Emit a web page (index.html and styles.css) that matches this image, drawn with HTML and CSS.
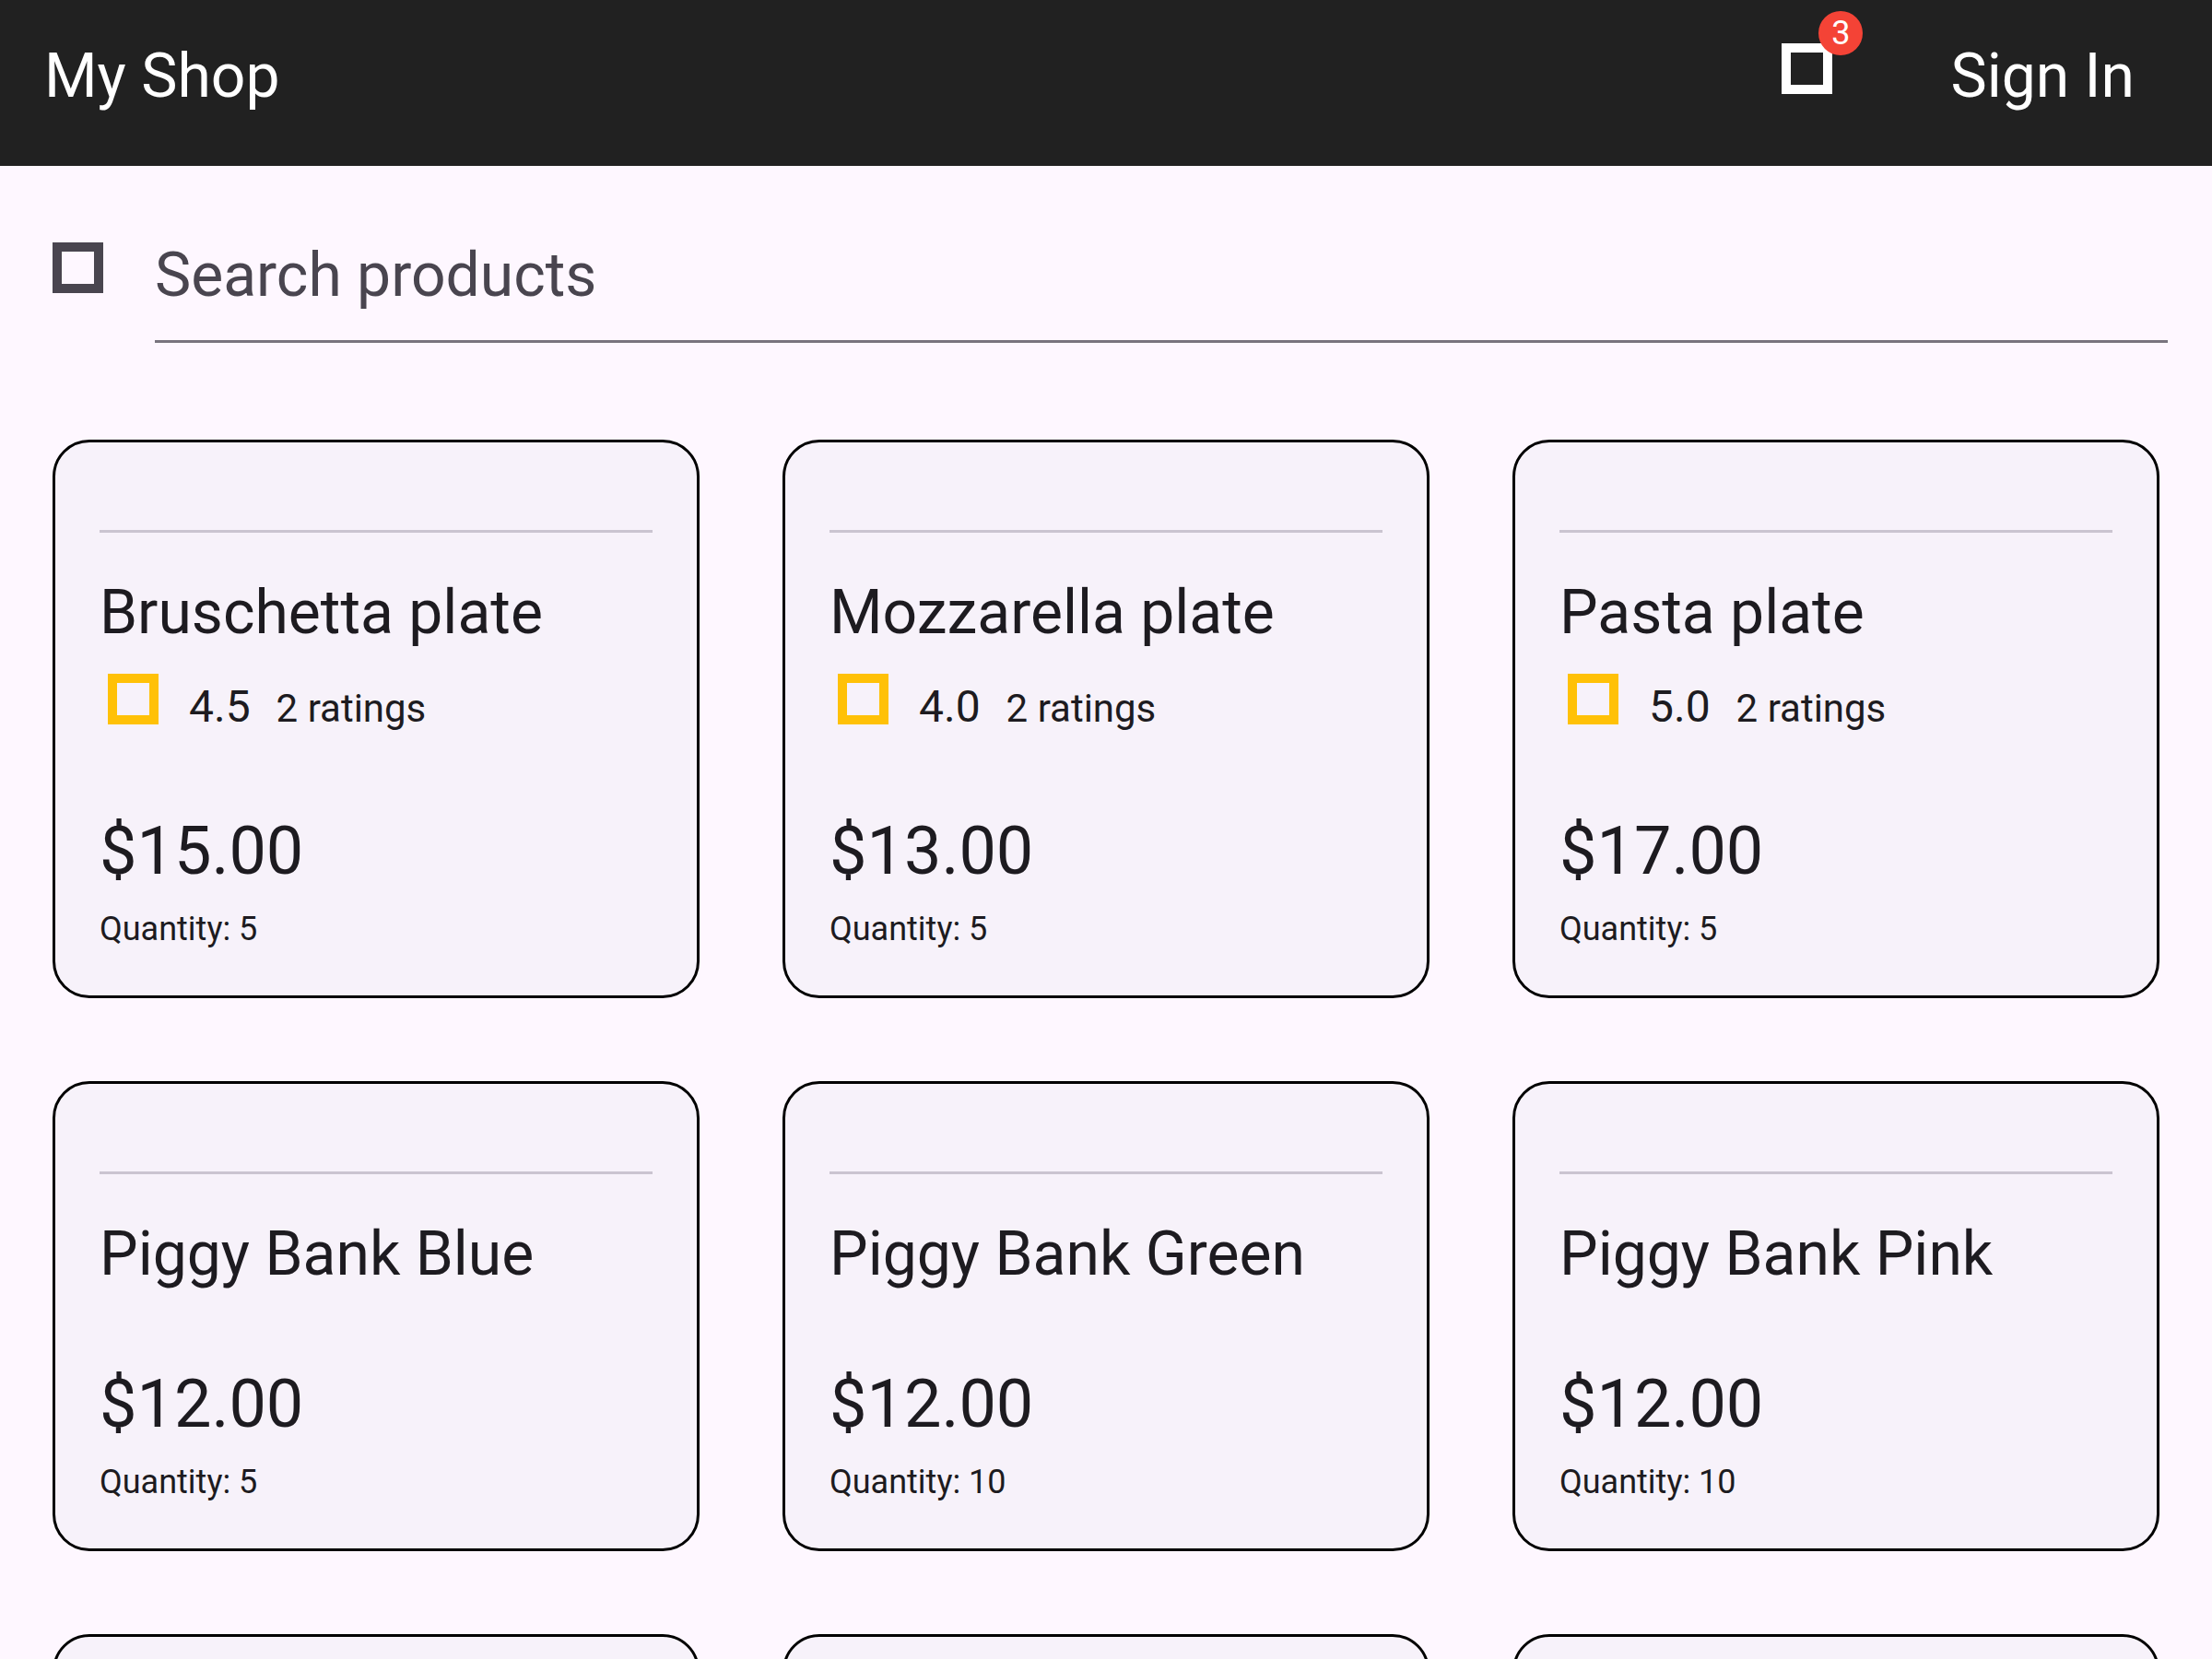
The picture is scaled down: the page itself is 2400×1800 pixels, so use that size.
FILE: index.html
```html
<!DOCTYPE html>
<html lang="en">
<head>
  <meta charset="utf-8">
  <title>My Shop</title>
  <meta name="viewport" content="width=device-width, initial-scale=1">
  <link rel="stylesheet" href="styles.css">
</head>
<body>
  <header class="app-bar">
    <h1 class="app-title">My Shop</h1>
    <nav class="actions">
      <button class="cart" type="button" aria-label="Cart, 3 items">
        <span class="glyph"></span>
        <span class="badge">3</span>
      </button>
      <a class="sign-in" href="#">Sign In</a>
    </nav>
  </header>

  <main>
    <form class="search" role="search">
      <label class="search-icon" for="search" aria-label="Search products"><span class="glyph"></span></label>
      <input class="search-input" id="search" type="text" placeholder="Search products">
    </form>

    <section class="products">
      <article class="card">
        <hr class="divider">
        <h2 class="name">Bruschetta plate</h2>
        <div class="rating">
          <span class="glyph star"></span>
          <p class="score">4.5 <span class="count">2 ratings</span></p>
        </div>
        <p class="price">$15.00</p>
        <p class="quantity">Quantity: 5</p>
      </article>
      <article class="card">
        <hr class="divider">
        <h2 class="name">Mozzarella plate</h2>
        <div class="rating">
          <span class="glyph star"></span>
          <p class="score">4.0 <span class="count">2 ratings</span></p>
        </div>
        <p class="price">$13.00</p>
        <p class="quantity">Quantity: 5</p>
      </article>
      <article class="card">
        <hr class="divider">
        <h2 class="name">Pasta plate</h2>
        <div class="rating">
          <span class="glyph star"></span>
          <p class="score">5.0 <span class="count">2 ratings</span></p>
        </div>
        <p class="price">$17.00</p>
        <p class="quantity">Quantity: 5</p>
      </article>
      <article class="card">
        <hr class="divider">
        <h2 class="name">Piggy Bank Blue</h2>
        <p class="price">$12.00</p>
        <p class="quantity">Quantity: 5</p>
      </article>
      <article class="card">
        <hr class="divider">
        <h2 class="name">Piggy Bank Green</h2>
        <p class="price">$12.00</p>
        <p class="quantity">Quantity: 10</p>
      </article>
      <article class="card">
        <hr class="divider">
        <h2 class="name">Piggy Bank Pink</h2>
        <p class="price">$12.00</p>
        <p class="quantity">Quantity: 10</p>
      </article>
      <article class="card"></article>
      <article class="card"></article>
      <article class="card"></article>
    </section>
  </main>
</body>
</html>
```

FILE: styles.css
```css
* {
  box-sizing: border-box;
}

body {
  height: 100vh;
  margin: 0;
  overflow: hidden;
  background: #fef7ff;
  color: #1d1b20;
  font-family: Roboto, "Liberation Sans", sans-serif;
}

h1,
h2,
p {
  margin: 0;
  font-weight: 400;
}

/* Square icon placeholder */
.glyph {
  display: block;
  flex: none;
  width: 55px;
  height: 55px;
  border: 10px solid currentColor;
}

/* App bar */
.app-bar {
  display: flex;
  justify-content: space-between;
  align-items: flex-start;
  padding: 41px 84px 55px 48px;
  background: #212121;
  color: #fff;
}

.app-title,
.sign-in {
  font-size: 66px;
  line-height: 84px;
}

.actions {
  display: flex;
  align-items: flex-start;
  gap: 128px;
}

.cart {
  position: relative;
  padding: 6px 0 0;
  border: 0;
  background: none;
  color: inherit;
  font: inherit;
}

.badge {
  position: absolute;
  top: -29px;
  left: 40px;
  width: 48px;
  height: 48px;
  border-radius: 50%;
  background: #f44336;
  font-size: 36px;
  line-height: 48px;
  text-align: center;
}

.sign-in {
  color: inherit;
  text-decoration: none;
}

/* Search */
.search {
  display: flex;
  align-items: flex-start;
  gap: 56px;
  padding: 76px 48px 0 57px;
}

.search-icon {
  padding-top: 7px;
  color: #49454f;
}

.search-input {
  flex: 1;
  min-width: 0;
  height: 116px;
  padding: 0 0 29px;
  border: 0;
  border-bottom: 3px solid #79747e;
  border-radius: 0;
  outline: 0;
  background: none;
  color: #1d1b20;
  font: inherit;
  font-size: 66px;
  line-height: 84px;
}

.search-input::placeholder {
  color: #49454f;
  opacity: 1;
}

/* Product grid */
.products {
  display: grid;
  grid-template-columns: repeat(3, 1fr);
  gap: 90px;
  padding: 105px 57px 90px;
}

.card {
  min-height: 510px;
  padding: 95px 48px 48px;
  border: 3px solid #000;
  border-radius: 40px;
  background: #f7f2fa;
}

.divider {
  height: 3px;
  margin: 0 0 45px;
  border: 0;
  background: #cac4d0;
}

.name {
  font-size: 66px;
  line-height: 84px;
}

.rating {
  display: flex;
  align-items: flex-start;
  gap: 33px;
  padding: 24px 0 0 9px;
}

.star {
  color: #ffc107;
}

.score {
  display: flex;
  align-items: baseline;
  gap: 28px;
  font-size: 48px;
  line-height: 72px;
}

.count {
  font-size: 42px;
  line-height: 60px;
}

.price {
  margin-top: 73px;
  font-size: 72px;
  line-height: 96px;
}

.quantity {
  margin-top: 12px;
  font-size: 36px;
  line-height: 48px;
}
```
